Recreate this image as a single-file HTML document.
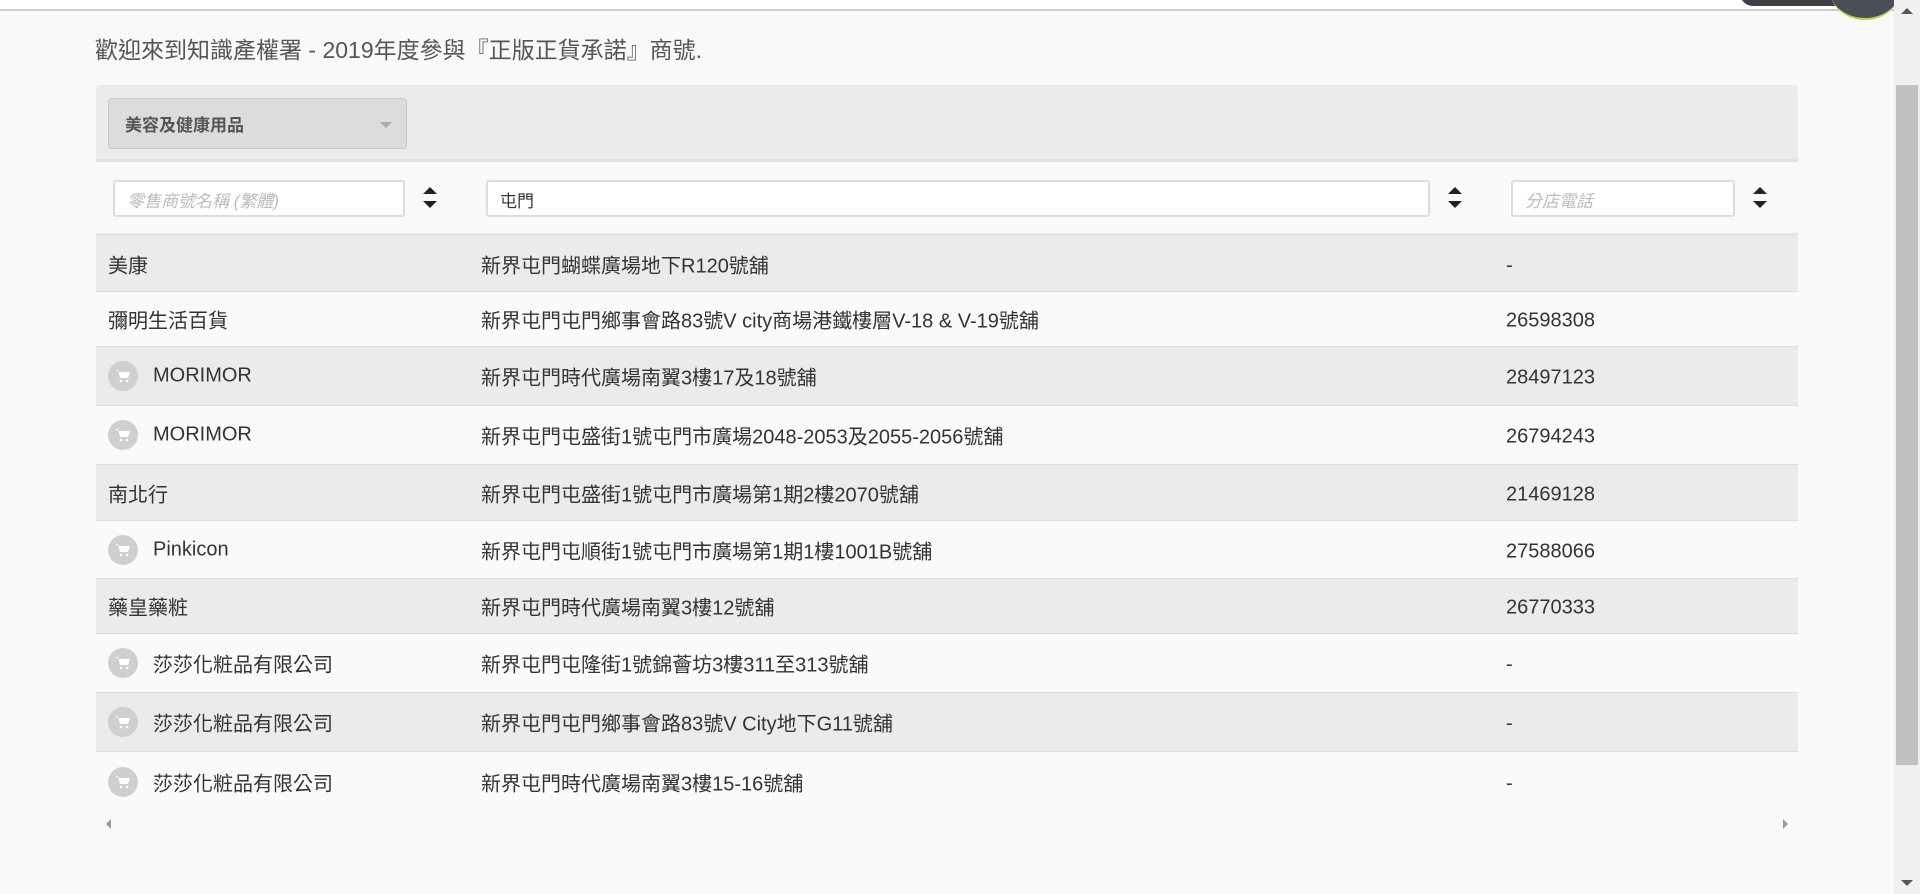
<!DOCTYPE html>
<html><head><meta charset="utf-8"><style>
*{box-sizing:border-box;margin:0;padding:0}
body{width:1920px;height:894px;background:#f9f9f9;font-family:"Liberation Sans","Noto Sans CJK TC",sans-serif;color:#333;position:relative;overflow:hidden}
.top{position:absolute;left:0;top:0;width:1894px;height:11px;background:#fff;border-bottom:2px solid #ccc}
.title{position:absolute;left:95px;top:31px;font-size:23px;color:#555}
.panel{position:absolute;left:96px;top:85px;width:1702px;height:753px;background:#f9f9f9;border-radius:4px;overflow:hidden}
.hdr{height:77px;background:#ebebeb;position:relative;border-bottom:3px solid #e0e0e0}
.dd{position:absolute;left:12px;top:13px;width:299px;height:51px;background:#dcdcdc;border:1px solid #c9c9c9;border-radius:3px;font-weight:bold;font-size:17px;color:#555;padding:12px 0 0 16px}
.dd:after{content:"";position:absolute;right:14px;top:23px;border:6px solid transparent;border-top:6px solid #aaa}
.flt{height:74px;background:#f9f9f9;position:relative;border-bottom:3px solid #e5e5e5}
.in{position:absolute;top:18px;height:37px;background:#fff;border:2px solid #ddd;border-radius:3px;font-size:17px;padding:5px 12px;color:#bbb;font-style:italic}
.sort{position:absolute;top:25px;width:14px;height:24px}
.sort:before{content:"";position:absolute;left:0;top:0;border:7px solid transparent;border-bottom:7px solid #222;border-top:0}
.sort:after{content:"";position:absolute;left:0;top:14px;border:7px solid transparent;border-top:7px solid #222;border-bottom:0}
.row{position:relative;font-size:20px;border-bottom:1px solid #ddd}
.row.o{background:#ebebeb}.row.e{background:#fafafa}
.row span{position:absolute;top:50%;transform:translateY(-50%);white-space:nowrap}
.c1{left:12px}.c1i{left:57px}.c2{left:385px}.c3{left:1410px;margin-top:2px}
.ic{position:absolute;left:12px;top:50%;margin-top:-15px;width:30px;height:30px;border-radius:50%;background:#cfcfcf}
.ic svg{position:absolute;left:7px;top:8px}
.sb{position:absolute;left:1894px;top:0;width:26px;height:894px;background:#f0f0f0}
.th{position:absolute;left:1896px;top:85px;width:22px;height:680px;background:#c1c1c1}
.hs{height:26px;background:#f9f9f9;position:relative}
</style></head><body>
<div class="top"></div>
<div style="position:absolute;left:1740px;top:-20px;width:150px;height:26px;border-radius:14px;background:#3d3f45"></div>
<div style="position:absolute;left:1830px;top:-40px;width:70px;height:60px;border-radius:50%;background:#4b4e57;border-bottom:2px solid #b8d04a"></div>
<div class="title">歡迎來到知識產權署 - 2019年度參與『正版正貨承諾』商號.</div>
<div class="panel">
<div class="hdr"><div class="dd">美容及健康用品</div></div>
<div class="flt">
<div class="in" style="left:17px;width:292px">零售商號名稱 (繁體)</div><div class="sort" style="left:327px"></div>
<div class="in" style="left:390px;width:944px;color:#333;font-style:normal">屯門</div><div class="sort" style="left:1352px"></div>
<div class="in" style="left:1415px;width:224px">分店電話</div><div class="sort" style="left:1657px"></div>
</div>
<div class="row o" style="height:56px"><span class="c1">美康</span><span class="c2">新界屯門蝴蝶廣場地下R120號舖</span><span class="c3">-</span></div>
<div class="row e" style="height:55px"><span class="c1">彌明生活百貨</span><span class="c2">新界屯門屯門鄉事會路83號V city商場港鐵樓層V-18 &amp; V-19號舖</span><span class="c3">26598308</span></div>
<div class="row o" style="height:59px"><div class="ic"><svg width="16" height="14" viewBox="0 0 16 14"><path d="M0 1h3l2 8h8l2-6H4" fill="#fff"/><circle cx="6" cy="12" r="1.3" fill="#fff"/><circle cx="12" cy="12" r="1.3" fill="#fff"/></svg></div><span class="c1i">MORIMOR</span><span class="c2">新界屯門時代廣場南翼3樓17及18號舖</span><span class="c3">28497123</span></div>
<div class="row e" style="height:59px"><div class="ic"><svg width="16" height="14" viewBox="0 0 16 14"><path d="M0 1h3l2 8h8l2-6H4" fill="#fff"/><circle cx="6" cy="12" r="1.3" fill="#fff"/><circle cx="12" cy="12" r="1.3" fill="#fff"/></svg></div><span class="c1i">MORIMOR</span><span class="c2">新界屯門屯盛街1號屯門市廣場2048-2053及2055-2056號舖</span><span class="c3">26794243</span></div>
<div class="row o" style="height:56px"><span class="c1">南北行</span><span class="c2">新界屯門屯盛街1號屯門市廣場第1期2樓2070號舖</span><span class="c3">21469128</span></div>
<div class="row e" style="height:58px"><div class="ic"><svg width="16" height="14" viewBox="0 0 16 14"><path d="M0 1h3l2 8h8l2-6H4" fill="#fff"/><circle cx="6" cy="12" r="1.3" fill="#fff"/><circle cx="12" cy="12" r="1.3" fill="#fff"/></svg></div><span class="c1i">Pinkicon</span><span class="c2">新界屯門屯順街1號屯門市廣場第1期1樓1001B號舖</span><span class="c3">27588066</span></div>
<div class="row o" style="height:55px"><span class="c1">藥皇藥粧</span><span class="c2">新界屯門時代廣場南翼3樓12號舖</span><span class="c3">26770333</span></div>
<div class="row e" style="height:59px"><div class="ic"><svg width="16" height="14" viewBox="0 0 16 14"><path d="M0 1h3l2 8h8l2-6H4" fill="#fff"/><circle cx="6" cy="12" r="1.3" fill="#fff"/><circle cx="12" cy="12" r="1.3" fill="#fff"/></svg></div><span class="c1i">莎莎化粧品有限公司</span><span class="c2">新界屯門屯隆街1號錦薈坊3樓311至313號舖</span><span class="c3">-</span></div>
<div class="row o" style="height:59px"><div class="ic"><svg width="16" height="14" viewBox="0 0 16 14"><path d="M0 1h3l2 8h8l2-6H4" fill="#fff"/><circle cx="6" cy="12" r="1.3" fill="#fff"/><circle cx="12" cy="12" r="1.3" fill="#fff"/></svg></div><span class="c1i">莎莎化粧品有限公司</span><span class="c2">新界屯門屯門鄉事會路83號V City地下G11號舖</span><span class="c3">-</span></div>
<div class="row e" style="height:59px;border-bottom:0"><div class="ic"><svg width="16" height="14" viewBox="0 0 16 14"><path d="M0 1h3l2 8h8l2-6H4" fill="#fff"/><circle cx="6" cy="12" r="1.3" fill="#fff"/><circle cx="12" cy="12" r="1.3" fill="#fff"/></svg></div><span class="c1i">莎莎化粧品有限公司</span><span class="c2">新界屯門時代廣場南翼3樓15-16號舖</span><span class="c3">-</span></div>
<div class="hs"><div style="position:absolute;left:10px;top:8px;border:5px solid transparent;border-right:5px solid #999;border-left:0"></div><div style="position:absolute;right:10px;top:8px;border:5px solid transparent;border-left:5px solid #999;border-right:0"></div></div>
</div>
<div class="sb"></div><div class="th"></div>
<div style="position:absolute;left:1901px;top:8px;border:6px solid transparent;border-bottom:6px solid #555;border-top:0"></div>
<div style="position:absolute;left:1901px;top:880px;border:6px solid transparent;border-top:6px solid #555;border-bottom:0"></div>
</body></html>
